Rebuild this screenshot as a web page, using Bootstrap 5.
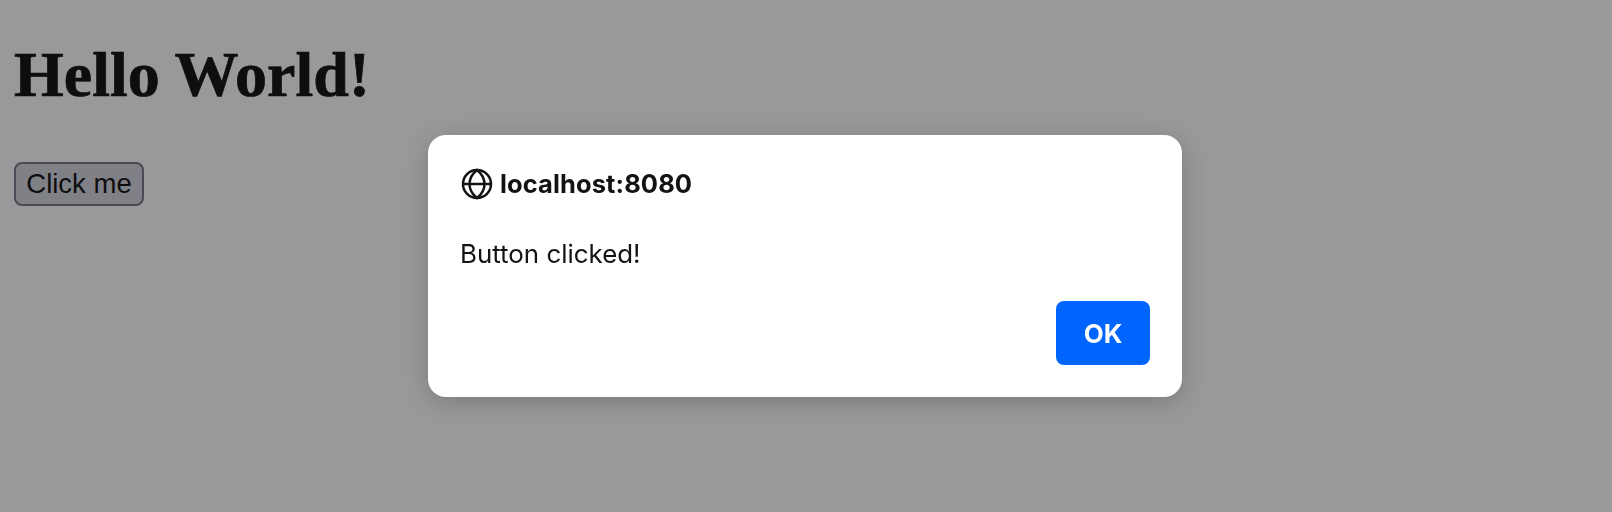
<!DOCTYPE html>
<html lang="en">
<head>
<meta charset="utf-8">
<title>Hello World</title>
<link href="https://cdn.jsdelivr.net/npm/bootstrap@5.3.0/dist/css/bootstrap.min.css" rel="stylesheet">
<style>
html, body { height: 100%; }
body { background: #99999b; overflow: hidden; color: #0e0e10; }
.page-wrap { padding: 43px 14px 0; }
.hello { font: 700 64px/1 "Liberation Serif", serif; -webkit-text-stroke: .7px #0e0e10; margin: 0 0 55px; color: #0e0e10; }
.click-btn { font: 400 27.5px/1 "Liberation Sans", sans-serif; color: #0e0e10; background: #808087; border: 2px solid #4a4a57; border-radius: 8px; height: 44px; width: 130px; padding: 0; }
.dlg-layer { position: fixed; inset: 0; padding: 135px 2px 0 0; }
.dlg-box { width: 754px; height: 262px; background: #fff; border-radius: 18px; padding: 33px 32px 32px 32px; box-shadow: 0 5px 24px rgba(0,0,0,.2); font-family: Inter, sans-serif; color: #131316; }
.dlg-title { font-size: 25.5px; font-weight: 700; line-height: 32px; gap: 7px; padding-left: 1px; letter-spacing: .1px; }
.dlg-msg { font-size: 25.9px; line-height: 32px; margin: 38px 0 0; }
.dlg-ok { width: 94px; height: 64px; background: #0064ff; border: 0; border-radius: 8px; color: #fff; font-size: 26px; font-weight: 700; font-family: Inter, sans-serif; padding: 0; }
</style>
</head>
<body>
<div class="page-wrap">
  <h1 class="hello">Hello World!</h1>
  <button class="click-btn" type="button">Click me</button>
</div>
<div class="dlg-layer d-flex justify-content-center align-items-start">
  <div class="dlg-box d-flex flex-column">
    <div class="dlg-title d-flex align-items-center">
      <svg width="32" height="32" viewBox="0 0 32 32" fill="none" stroke="#131316" stroke-width="2.5"><circle cx="16" cy="16" r="14"/><path d="M16 2c-5 4-7.500 9-7.500 14s2.500 10 7.500 14c5-4 7.500-9 7.500-14s-2.500-10-7.500-14zM2 16h28"/></svg>
      <span>localhost:8080</span>
    </div>
    <p class="dlg-msg">Button clicked!</p>
    <div class="d-flex justify-content-end mt-auto">
      <button class="dlg-ok" type="button">OK</button>
    </div>
  </div>
</div>
<script src="https://cdn.jsdelivr.net/npm/bootstrap@5.3.0/dist/js/bootstrap.bundle.min.js"></script>
</body>
</html>
